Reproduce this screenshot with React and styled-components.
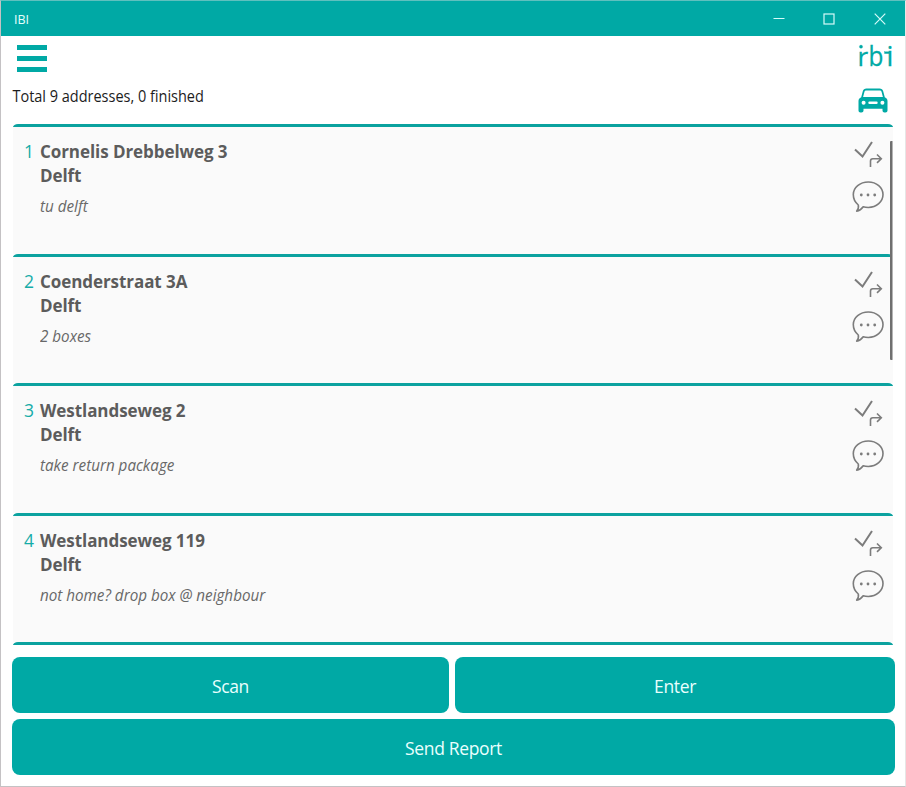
import { useState } from 'react';
import styled, { createGlobalStyle } from 'styled-components';

const teal = '#00a9a5';

const GlobalStyles = createGlobalStyle`
  * {
    box-sizing: border-box;
  }
  body {
    margin: 0;
    font-family: 'Open Sans', 'Noto Sans', sans-serif;
    background: #fff;
  }
`;

const Window = styled.div`
  width: 906px;
  height: 787px;
  display: flex;
  flex-direction: column;
  background: #fff;
  border: 1px solid #c4c2c4;
  border-top-color: #5fc0be;
  border-right-color: #e6e6e6;
  overflow: hidden;
`;

const TitleBar = styled.header`
  height: 35px;
  flex: none;
  display: flex;
  align-items: center;
  justify-content: space-between;
  padding-left: 13px;
  background: ${teal};
  color: #e4fffd;
`;

const AppName = styled.span`
  font-size: 12.5px;
  line-height: 18px;
  padding-top: 2px;
`;

const WindowButtons = styled.div`
  display: flex;
`;

const WindowButton = styled.button`
  width: 50.5px;
  height: 35px;
  padding: 0;
  border: 0;
  background: none;
  color: #d5fbf9;
  display: flex;
  align-items: center;
  justify-content: center;
`;

const TopBar = styled.div`
  height: 88px;
  flex: none;
  display: flex;
  justify-content: space-between;
  padding: 0 12px 0 11px;
`;

const TopLeft = styled.div`
  display: flex;
  flex-direction: column;
  gap: 13px;
  padding-top: 9px;
`;

const TopRight = styled.div`
  display: flex;
  flex-direction: column;
  align-items: flex-end;
  gap: 12px;
`;

const MenuButton = styled.button`
  width: 30px;
  height: 27px;
  margin-left: 5px;
  padding: 0;
  border: 0;
  background: none;
  display: flex;
  flex-direction: column;
  justify-content: space-between;
`;

const MenuBar = styled.span`
  width: 30px;
  height: 5px;
  background: ${teal};
`;

const Summary = styled.div`
  padding-left: 0.5px;
  font-size: 16px;
  line-height: 22px;
  color: #1c1c1c;
  white-space: nowrap;
  transform: scaleX(0.905);
  transform-origin: left;
`;

const ListArea = styled.main`
  position: relative;
  height: 521px;
  flex: none;
  margin: 0 12px;
  overflow: hidden;
`;

const Row = styled.article`
  height: 129.5px;
  display: flex;
  padding: 13px 9px 0 11px;
  background: #fafafa;
  border-top: 3px solid #0ba29f;
  border-radius: 5px 5px 0 0 / 3px 3px 0 0;
`;

const Number = styled.span`
  width: 16px;
  flex: none;
  font-size: 17.5px;
  line-height: 23px;
  color: #15aca8;
`;

const Details = styled.div`
  flex: 1;
  color: #5c5c5c;
`;

const Address = styled.div`
  font-size: 17px;
  font-weight: 700;
  line-height: 24px;
  letter-spacing: -0.07px;
`;

const Note = styled.div`
  margin-top: 7px;
  font-size: 16px;
  font-style: italic;
  line-height: 22px;
  color: #686868;
  transform: scaleX(0.95);
  transform-origin: left;
`;

const Actions = styled.div`
  display: flex;
  flex-direction: column;
  align-items: flex-end;
  gap: 13px;
  color: #7c7c7c;
`;

const Scrollbar = styled.div`
  position: absolute;
  top: 17px;
  right: 0;
  width: 3px;
  height: 219px;
  border-radius: 1px;
  border-right: 1px solid #b5b5b5;
  background: #707070;
`;

const Footer = styled.footer`
  display: grid;
  grid-template-columns: 437px 1fr;
  gap: 6px;
  padding: 12px 10px 0 11px;
`;

const ActionButton = styled.button`
  grid-column: ${(props) => (props.$wide ? '1 / -1' : 'auto')};
  height: 56px;
  padding: 1px 0 0;
  border: 0;
  border-radius: 8px;
  background: ${teal};
  color: #eafffe;
  font-family: inherit;
  font-size: 17.5px;
  letter-spacing: -0.35px;
`;

const addresses = [
  { street: 'Cornelis Drebbelweg 3', city: 'Delft', note: 'tu delft' },
  { street: 'Coenderstraat 3A', city: 'Delft', note: '2 boxes' },
  { street: 'Westlandseweg 2', city: 'Delft', note: 'take return package' },
  { street: 'Westlandseweg 119', city: 'Delft', note: 'not home? drop box @ neighbour' },
];

const Logo = () => (
  <svg width="40" height="40" viewBox="0 0 40 40" fill={teal} stroke={teal} strokeWidth="0.3" fontFamily="Open Sans" fontSize="26">
    <text x="4.500" y="30">r</text>
    <circle cx="8" cy="10.700" r="1.600" />
    <text transform="translate(15.500 30) scale(0.9 1)" fontSize="27">b</text>
    <text x="33.500" y="30" fontSize="27">i</text>
    <rect x="31.500" y="15.800" width="5" height="1.800" />
  </svg>
);

const CarIcon = () => (
  <svg width="35" height="25" viewBox="0 0 35 25">
    <path
      fill={teal}
      fillRule="evenodd"
      d="M8.500 0.500h13c2 0 3.200 1 3.700 2.800l1.600 6c1.800.7 2.700 2 2.700 3.700V22.500c0 1.200-.8 2-2 2h-1c-1.200 0-2-.8-2-2v-1.700H5.500v1.700c0 1.200-.8 2-2 2h-1c-1.200 0-2-.8-2-2V13c0-1.700.9-3 2.700-3.700l1.600-6C5.300 1.500 6.500 .5 8.500 .5zM8.500 2.400c-1.100 0-1.800.4-2.100 1.500L5.100 9.100h19.800L23.600 3.900c-.3-1.100-1-1.500-2.100-1.500zM5.600 12.800a2 2 0 1 0 0 4 2 2 0 0 0 0-4zM24.400 12.800a2 2 0 1 0 0 4 2 2 0 0 0 0-4zM11.500 13.600a1.100 1.100 0 0 0 0 2.400h7a1.100 1.100 0 0 0 0-2.400z"
    />
  </svg>
);

const CheckForwardIcon = () => (
  <svg width="31" height="28" viewBox="0 0 31 28" fill="none" stroke="currentColor">
    <path d="M2 9.500L9.500 16.500L19 2" strokeWidth="2" />
    <path d="M17.500 27V21c0-1.500.6-2.300 2.300-2.300h8M24 14.500l4.300 4.200l-4.300 4.200" strokeWidth="1.600" />
  </svg>
);

const CommentIcon = () => (
  <svg width="32" height="32" viewBox="0 0 32 32">
    <path
      fill="none"
      stroke="currentColor"
      strokeWidth="1.600"
      strokeLinejoin="round"
      d="M16.300 1c8.200 0 14.700 5.500 14.700 12.600S24.500 26.500 16.300 26.500c-1.900 0-3.600-.2-5.100-.7C9.700 28 7.600 29.700 4.700 30.100c1.500-1.500 2.100-3.500 1.600-6.100C3.200 21.500 1.300 17.800 1.300 13.600C1.300 6.500 8 1 16.300 1z"
    />
    <g fill="currentColor">
      <circle cx="9.300" cy="14" r="1.400" />
      <circle cx="16" cy="14" r="1.400" />
      <circle cx="22.700" cy="14" r="1.400" />
    </g>
  </svg>
);

const AddressRow = ({ number, address }) => (
  <Row>
    <Number>{number}</Number>
    <Details>
      <Address>{address.street}</Address>
      <Address>{address.city}</Address>
      <Note>{address.note}</Note>
    </Details>
    <Actions>
      <CheckForwardIcon />
      <CommentIcon />
    </Actions>
  </Row>
);

const App = () => {
  const [finished] = useState(0);

  return (
    <>
      <GlobalStyles />
      <Window>
        <TitleBar>
          <AppName>IBI</AppName>
          <WindowButtons>
            <WindowButton aria-label="Minimize">
              <svg width="12" height="12" stroke="currentColor"><path d="M0.500 5.500h11" /></svg>
            </WindowButton>
            <WindowButton aria-label="Maximize">
              <svg width="12" height="12" stroke="currentColor" fill="none"><rect x="1" y="1" width="10" height="10" strokeWidth="1.200" /></svg>
            </WindowButton>
            <WindowButton aria-label="Close">
              <svg width="12" height="12" stroke="currentColor"><path d="M0.700 0.700l10.600 10.600M11.300 0.700L0.700 11.300" strokeWidth="1.200" /></svg>
            </WindowButton>
          </WindowButtons>
        </TitleBar>
        <TopBar>
          <TopLeft>
            <MenuButton aria-label="Menu">
              <MenuBar />
              <MenuBar />
              <MenuBar />
            </MenuButton>
            <Summary>Total 9 addresses, {finished} finished</Summary>
          </TopLeft>
          <TopRight>
            <Logo />
            <CarIcon />
          </TopRight>
        </TopBar>
        <ListArea>
          {addresses.map((address, i) => (
            <AddressRow key={i} number={i + 1} address={address} />
          ))}
          <Row />
          <Scrollbar />
        </ListArea>
        <Footer>
          <ActionButton>Scan</ActionButton>
          <ActionButton>Enter</ActionButton>
          <ActionButton $wide>Send Report</ActionButton>
        </Footer>
      </Window>
    </>
  );
};

export default App;
